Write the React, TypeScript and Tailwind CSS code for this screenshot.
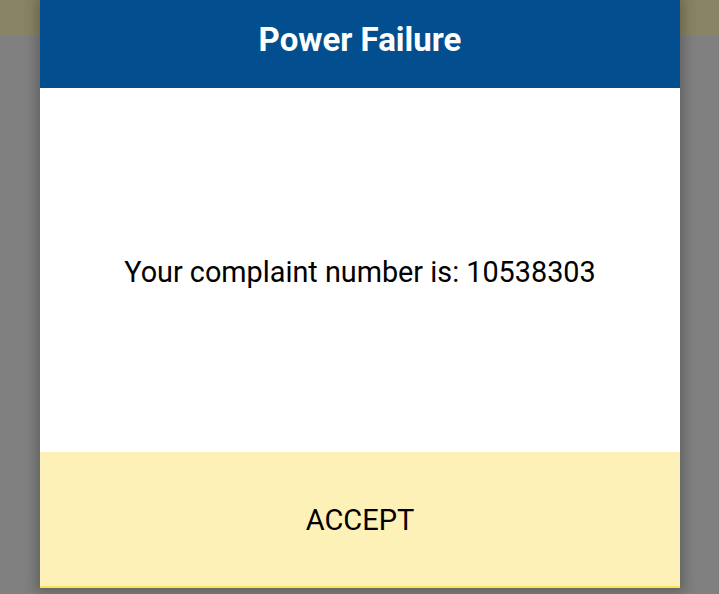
export default function App() {
  return (
    <div
      className="relative w-[719px] h-[594px] overflow-hidden bg-[#808080]"
      style={{ fontFamily: "Roboto, 'Liberation Sans', sans-serif" }}
    >
      <div className="h-[36px] bg-[#8a8466]" />
      <div className="absolute left-[40px] top-0 w-[640px] h-[588px] flex flex-col shadow-[0_0_12px_4px_rgba(0,0,0,0.25)]">
        <div className="h-[88px] bg-[#024e8f] flex items-center justify-center border-b border-[#0b4a82]">
          <span className="text-white font-bold text-[33px] leading-none mb-[8px]">Power Failure</span>
        </div>
        <div className="h-[364px] bg-white flex items-center justify-center">
          <span className="text-black text-[28.8px] leading-none mt-[5px]">Your complaint number is: 10538303</span>
        </div>
        <div className="flex-1 bg-[#fef1b8] flex items-center justify-center border-b-[2px] border-[#fde255]">
          <span className="text-black text-[29px] leading-none mt-[2px]">ACCEPT</span>
        </div>
      </div>
    </div>
  );
}
